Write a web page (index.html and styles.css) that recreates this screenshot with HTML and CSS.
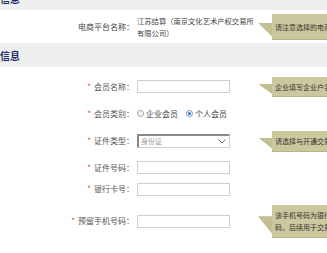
FILE: index.html
```html
<!DOCTYPE html>
<html lang="zh-CN">
<head>
<meta charset="utf-8">
<link rel="stylesheet" href="styles.css">
</head>
<body>
<div class="page">
  <div class="sec-head sec-top"><span>平台信息</span></div>
  <div class="row row-platform">
    <div class="label label-dark">电商平台名称：</div>
    <div class="field value">江苏结算（南京文化艺术产权交易所有限公司）</div>
    <div class="tip tip-1">请注意选择的电商平台名称</div>
  </div>
  <div class="sec-head"><span>会员信息</span></div>
  <div class="form">
    <div class="row frow">
      <div class="label"><span class="star">*</span>会员名称：</div>
      <div class="field"><div class="input"></div></div>
      <div class="tip tip-2">企业填写企业户名，个人填写姓名</div>
    </div>
    <div class="row frow">
      <div class="label"><span class="star">*</span>会员类别：</div>
      <div class="field radios">
        <span class="radio"><span class="dot"></span>企业会员</span>
        <span class="radio"><span class="dot on"></span>个人会员</span>
      </div>
    </div>
    <div class="row frow">
      <div class="label"><span class="star">*</span>证件类型：</div>
      <div class="field">
        <div class="select"><span>身份证</span>
          <svg class="chev" width="8" height="5" viewBox="0 0 8 5"><polyline points="0.5,0.5 4,4 7.5,0.5" fill="none" stroke="#666" stroke-width="1"/></svg>
        </div>
      </div>
      <div class="tip tip-3">请选择与开通交易账户一致的证件</div>
    </div>
    <div class="row frow">
      <div class="label"><span class="star">*</span>证件号码：</div>
      <div class="field"><div class="input"></div></div>
    </div>
    <div class="row frow-short">
      <div class="label"><span class="star">*</span>银行卡号：</div>
      <div class="field"><div class="input"></div></div>
    </div>
    <div class="row frow-phone">
      <div class="label"><span class="star">*</span>预留手机号码：</div>
      <div class="field"><div class="input"></div></div>
      <div class="tip tip-4">该手机号码为银行预留手机号<br>码，后续用于交易验证</div>
    </div>
  </div>
</div>
</body>
</html>
```

FILE: styles.css
```css
html, body {
  margin: 0;
  padding: 0;
  background: #fff;
}
body {
  font-family: "Noto Sans CJK SC", "Liberation Sans", sans-serif;
  overflow: hidden;
}
.page {
  width: 327px;
  height: 253px;
  overflow: hidden;
}
.sec-head {
  height: 24px;
  background: #efefef;
  display: flex;
  align-items: center;
}
.sec-head span {
  margin-left: -20px;
  font-size: 10px;
  font-weight: bold;
  color: #1f2c6c;
  white-space: nowrap;
}
.sec-top {
  margin-top: -14px;
}
.row {
  display: flex;
  align-items: center;
}
.row-platform {
  height: 33px;
}
.label {
  width: 134px;
  flex: none;
  text-align: right;
  font-size: 8px;
  line-height: 12px;
  color: #555;
  white-space: nowrap;
}
.label-dark {
  color: #444;
}
.star {
  color: #e0404a;
  margin-right: 3px;
}
.field {
  width: 121px;
  flex: none;
  margin-left: 3px;
}
.value {
  width: 118px;
  margin-right: 3px;
  font-size: 7.3px;
  line-height: 12px;
  color: #444;
}
.tip {
  flex: none;
  position: relative;
  margin-left: 14px;
  width: 120px;
  background: #ccc89e;
  color: #333;
  font-size: 7px;
  line-height: 12px;
  padding: 0 3px;
  white-space: nowrap;
  box-shadow: 0 1px 0 #b9b58a;
}
.tip::before {
  content: "";
  position: absolute;
  left: -14px;
  top: 35%;
  bottom: 10%;
  width: 14px;
  background: #c3bf93;
  clip-path: polygon(0 0, 100% 0, 100% 100%);
}
.tip-1 { padding-top: 6.5px; padding-bottom: 6.5px; }
.tip-2 { padding-top: 3.5px; padding-bottom: 3.5px; }
.tip-3 { padding-top: 4px; padding-bottom: 4px; }
.tip-4 { padding-top: 4px; padding-bottom: 4px; }
.form {
  padding-top: 6px;
}
.frow {
  height: 27px;
}
.frow-short {
  height: 16px;
}
.frow-phone {
  height: 32px;
  margin-top: 8px;
}
.input {
  width: 93px;
  height: 13px;
  box-sizing: border-box;
  border: 1px solid #cfcfcf;
  background: #fff;
}
.select {
  width: 93px;
  height: 14px;
  box-sizing: border-box;
  border: 1px solid #d0d0d0;
  border-top: 2px solid #8a8a8a;
  border-left: 2px solid #8a8a8a;
  display: flex;
  align-items: center;
  justify-content: space-between;
  padding: 0 3px 0 2px;
  font-size: 7px;
  color: #9a9a9a;
}
.chev {
  display: block;
}
.radios {
  display: flex;
  align-items: center;
  gap: 8px;
  font-size: 8px;
  color: #444;
}
.radio {
  display: flex;
  align-items: center;
  gap: 2px;
}
.dot {
  width: 7px;
  height: 7px;
  box-sizing: border-box;
  border: 1px solid #9a9a9a;
  border-radius: 50%;
  background: #f4f4f4;
  position: relative;
}
.dot.on {
  border-color: #6f8fc0;
  background: #fff;
}
.dot.on::after {
  content: "";
  position: absolute;
  left: 1px;
  top: 1px;
  width: 3px;
  height: 3px;
  border-radius: 50%;
  background: #2f6fd0;
}
```
